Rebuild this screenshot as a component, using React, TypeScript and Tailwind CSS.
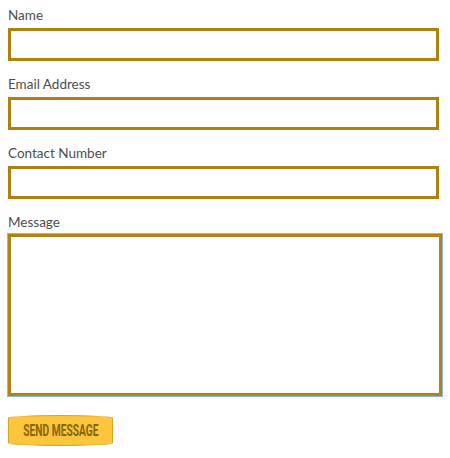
const FIELDS = ['Name', 'Email Address', 'Contact Number'];

export default function App() {
  return (
    <div className="min-h-[458px] w-[450px] bg-white px-2 pt-[5px] font-['Lato','Liberation_Sans',sans-serif]">
      {FIELDS.map((label) => (
        <div key={label} className="mb-[13px]">
          <label className="mb-[3px] block h-5 text-[13.5px] leading-5 text-[#4d4d4d]">{label}</label>
          <input
            type="text"
            className="block h-[33px] w-[431px] border-[3px] border-[#b0800e] bg-white outline-none"
          />
        </div>
      ))}

      <div>
        <label className="mb-[2px] block h-5 text-[13.5px] leading-5 text-[#4d4d4d]">Message</label>
        <textarea className="block h-[162px] w-[434px] resize-none border-[3px] border-[#b48214] bg-white outline outline-1 outline-[#8fb4e6]" />
      </div>

      <button
        type="button"
        className="mt-[19px] flex h-[31px] w-[105px] items-center justify-center overflow-hidden rounded-[50%/3px] border border-[#d9a520] bg-[#fcc53c] text-[#87640f]"
      >
        <span className="inline-block scale-x-[0.64] whitespace-nowrap font-['Roboto',sans-serif] text-[16px] font-bold leading-none">
          SEND MESSAGE
        </span>
      </button>
    </div>
  );
}
